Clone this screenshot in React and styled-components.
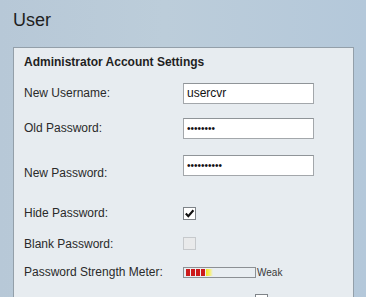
import React from 'react'
import styled, { createGlobalStyle } from 'styled-components';

const GlobalStyle = createGlobalStyle`
  html, body {
    margin: 0;
    height: 100%;
    overflow: hidden;
  }
  body {
    background: linear-gradient(to right, #b7c8d7 0%, #bccdda 45%, #b4c8da 100%);
    font-family: 'Liberation Sans', Arial, sans-serif;
    color: #2b2b2b;
  }
`;

const Check = ({ checked, disabled }) => (
    <CheckBox $disabled={disabled}>
        {checked && (
            <svg width="11" height="11" viewBox="0 0 11 11">
                <path d="M1.8 5.6 L4.3 8.2 L9.4 2.2" fill="none" stroke="#111" strokeWidth="2.1" />
            </svg>
        )}
    </CheckBox>
);

const App = () => {
    return (
        <>
            <GlobalStyle />
            <Page>
                <Title>User</Title>
                <Panel>
                    <Heading>Administrator Account Settings</Heading>
                    <Rows>
                        <Row $h={34}>
                            <Label>New Username:</Label>
                            <TextInput type="text" defaultValue="usercvr" />
                        </Row>
                        <Row $h={36}>
                            <Label>Old Password:</Label>
                            <TextInput type="password" defaultValue="12345678" $pw />
                        </Row>
                        <SplitRow>
                            <Label $end>New Password:</Label>
                            <TextInput type="password" defaultValue="1234567890" $pw $start />
                        </SplitRow>
                        <Row $h={30} $mt={16}>
                            <Label>Hide Password:</Label>
                            <Check checked />
                        </Row>
                        <Row $h={31}>
                            <Label>Blank Password:</Label>
                            <Check disabled />
                        </Row>
                        <Row $h={26}>
                            <Label>Password Strength Meter:</Label>
                            <Meter>
                                {[0, 1, 2, 3].map((i) => <Block key={i} />)}
                                <Fade />
                            </Meter>
                            <MeterText>Weak</MeterText>
                        </Row>
                        <TopRow>
                            <Label $w={231} $start>Enforce Password Complexity Settings:</Label>
                            <Check />
                        </TopRow>
                    </Rows>
                </Panel>
            </Page>
        </>
    )
}

export default App;

const Page = styled.div`
    padding: 10px 10px 0 13px;
`;

const Title = styled.h1`
    margin: 0;
    font-size: 18px;
    font-weight: normal;
    line-height: 21px;
    color: #1e1e1e;
`;

const Panel = styled.div`
    margin-top: 16px;
    width: 341px;
    height: 400px;
    border: 1px solid #939fa9;
    background: #e7ecf0;
    padding: 7px 0 0 10px;
    box-sizing: border-box;
`;

const Heading = styled.div`
    font-size: 12px;
    font-weight: bold;
    line-height: 14px;
    color: #1f1f1f;
`;

const Rows = styled.div`
    margin-top: 7px;
    display: flex;
    flex-direction: column;
`;

const Row = styled.div`
    display: flex;
    align-items: center;
    height: ${(p) => p.$h}px;
    margin-top: ${(p) => p.$mt || 0}px;
`;

const SplitRow = styled.div`
    display: flex;
    height: 36px;
    padding: 9px 0 2px;
    box-sizing: border-box;
`;

const TopRow = styled.div`
    display: flex;
    align-items: flex-start;
    padding-top: 9px;
`;

const Label = styled.div`
    width: ${(p) => p.$w || 159}px;
    flex-shrink: 0;
    font-size: 12px;
    line-height: 14px;
    color: #2a2a2a;
    align-self: ${(p) => (p.$end ? 'flex-end' : p.$start ? 'flex-start' : 'center')};
    margin-top: ${(p) => (p.$start ? '1px' : '0')};
`;

const TextInput = styled.input`
    width: 131px;
    height: 21px;
    box-sizing: border-box;
    margin: 0;
    padding: 0 3px;
    border: 1px solid #a3a7ab;
    border-top-color: #8f9498;
    background: #fff;
    font-family: 'Liberation Sans', Arial, sans-serif;
    font-size: ${(p) => (p.$pw ? '10px' : '12px')};
    color: #111;
    outline: none;
    align-self: ${(p) => (p.$start ? 'flex-start' : 'center')};
`;

const CheckBox = styled.span`
    display: flex;
    align-items: center;
    justify-content: center;
    width: 13px;
    height: 13px;
    flex-shrink: 0;
    box-sizing: border-box;
    border: 1px solid ${(p) => (p.$disabled ? '#c6c9cc' : '#7e8388')};
    background: ${(p) => (p.$disabled ? '#e9eaeb' : '#fff')};
`;

const Meter = styled.div`
    display: flex;
    align-items: stretch;
    gap: 1px;
    width: 73px;
    height: 11px;
    box-sizing: border-box;
    padding: 1px 2px;
    border: 1px solid #8c9094;
    background: #e9eef2;
`;

const Block = styled.span`
    width: 4px;
    background: #cc1b1b;
`;

const Fade = styled.span`
    width: 7px;
    background: linear-gradient(to right, #f0e020, #f6f07a 60%, rgba(246, 240, 122, 0));
`;

const MeterText = styled.span`
    margin-left: 1px;
    font-size: 10px;
    color: #3a3a3a;
`;
